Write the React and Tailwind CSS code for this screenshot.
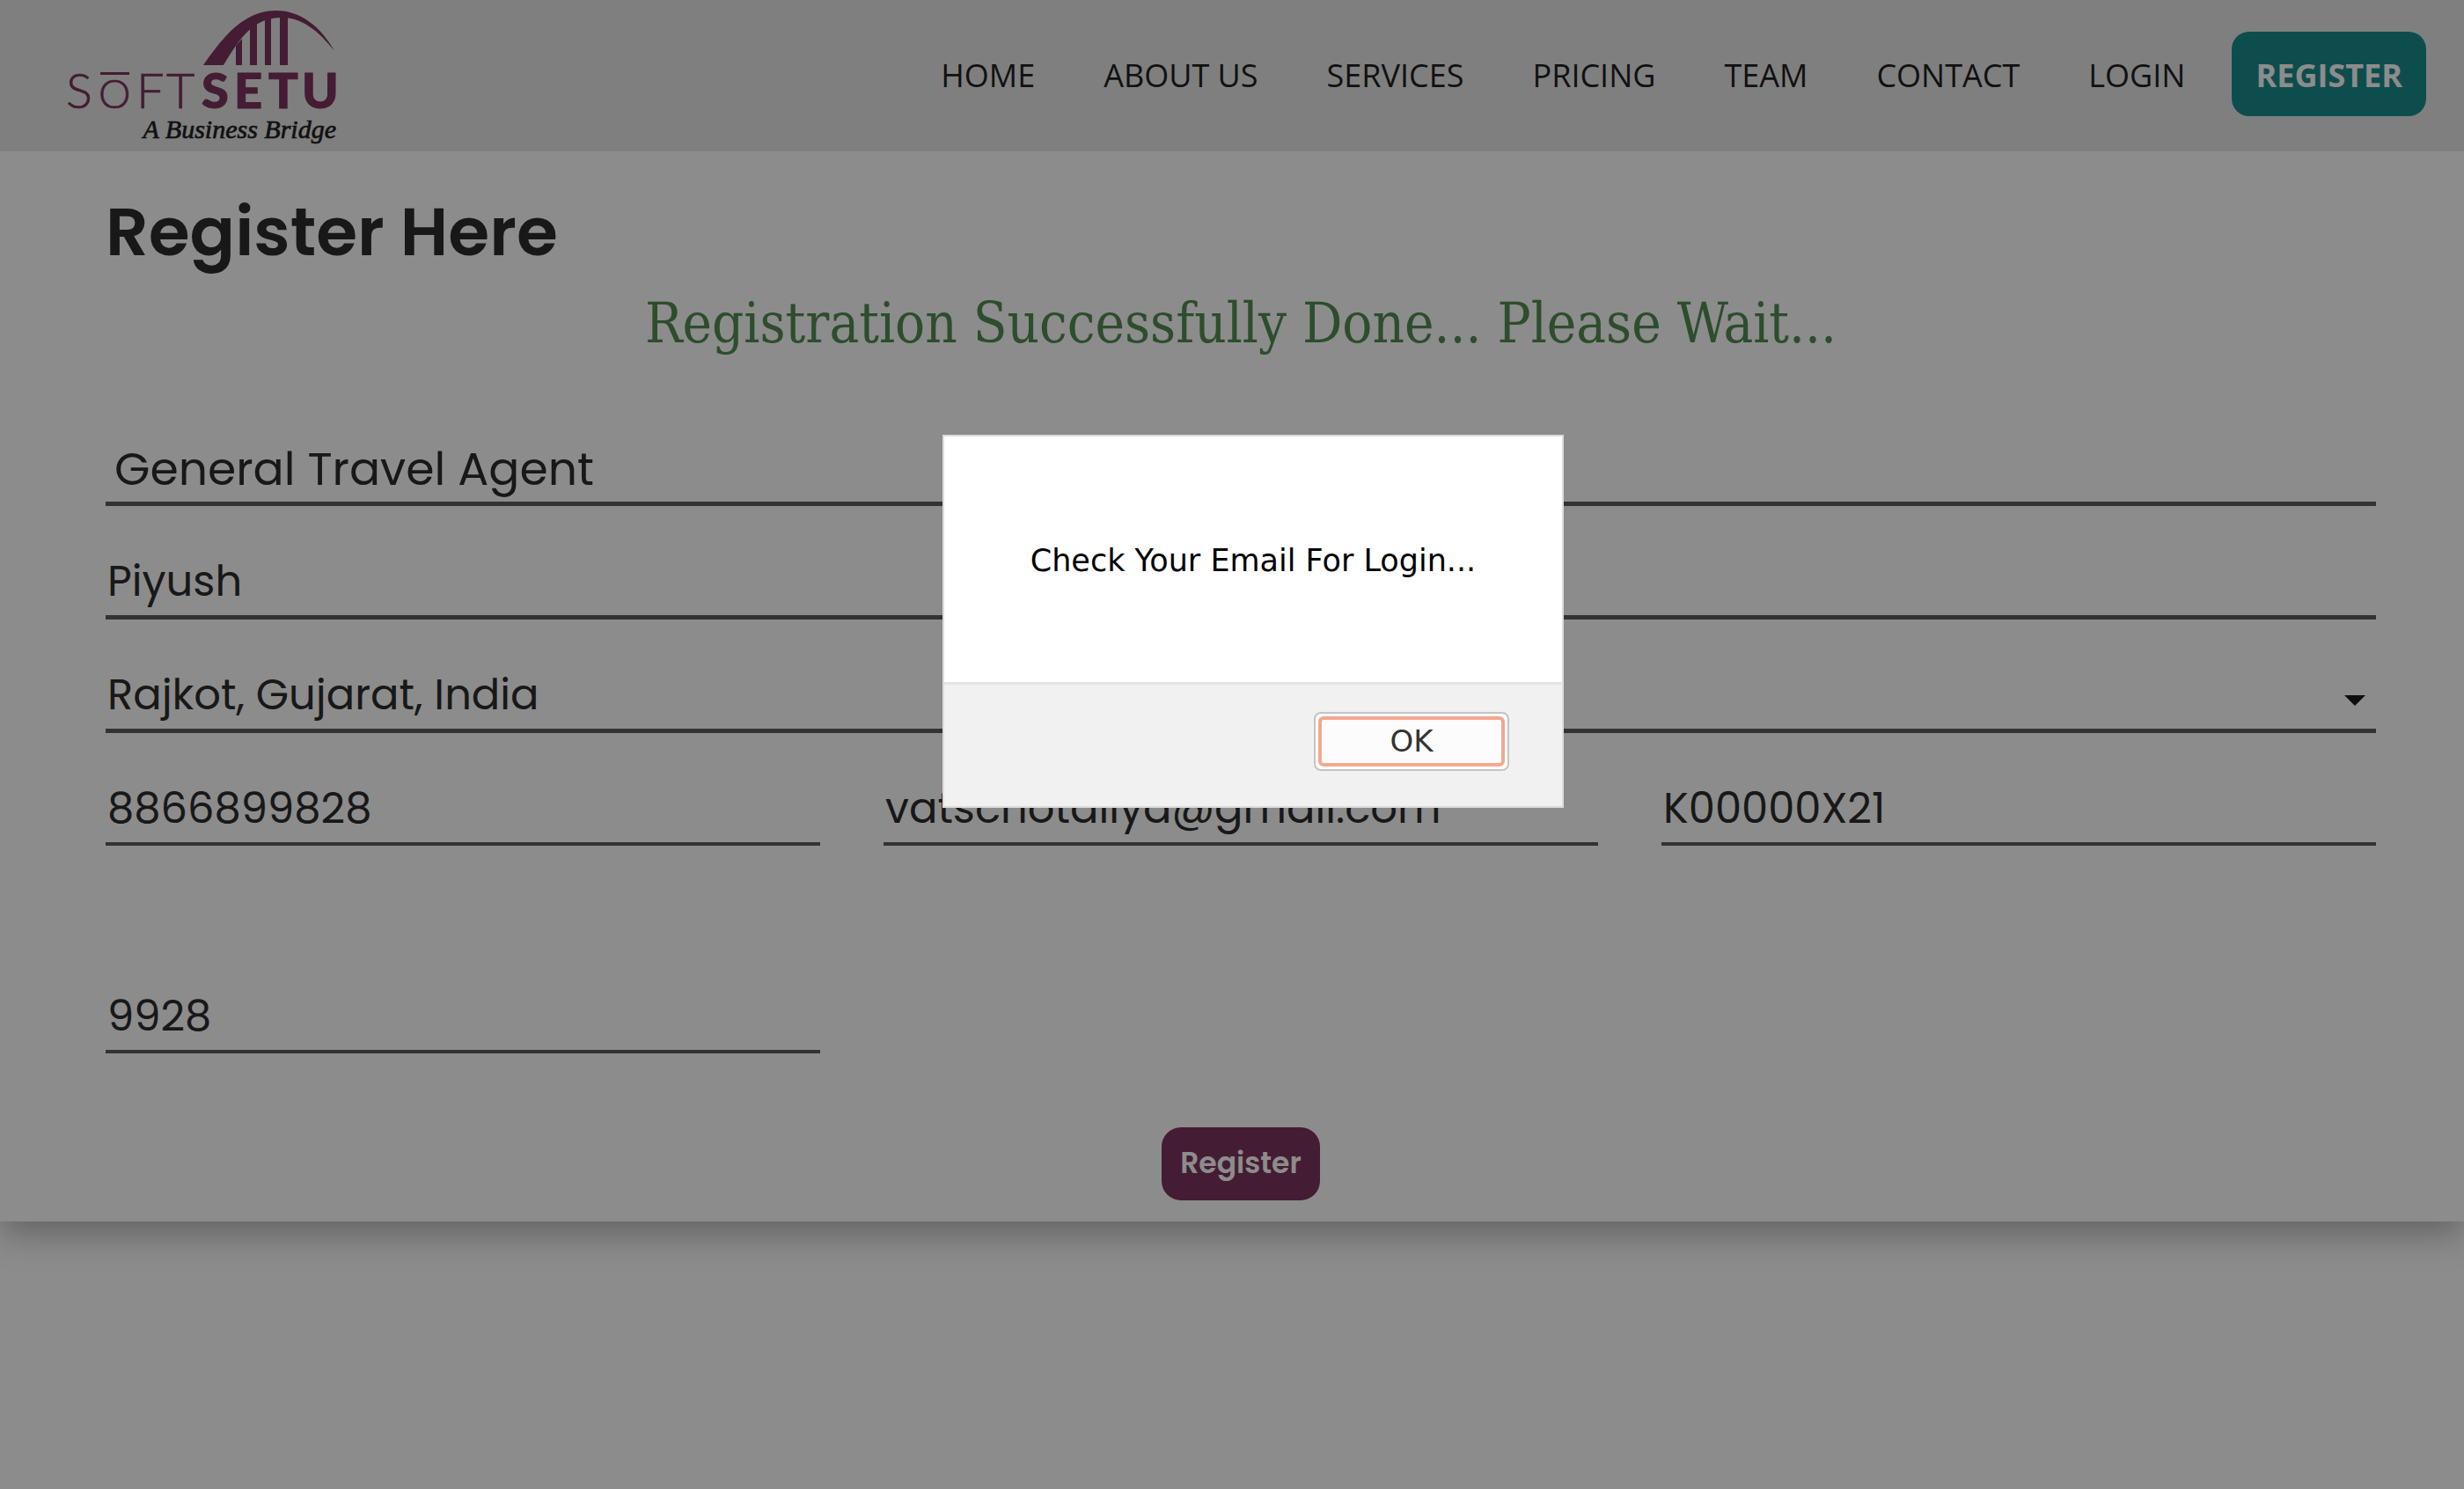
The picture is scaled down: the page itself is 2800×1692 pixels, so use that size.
import React from "react";

const LINKS = ["HOME", "ABOUT US", "SERVICES", "PRICING", "TEAM", "CONTACT", "LOGIN"];

const FIELD =
  "block w-full appearance-none rounded-none border-[#5d5d5d] bg-transparent text-[#2d2d2d] outline-none";
const WIDE = `${FIELD} h-[81px] border-b-5`;
const NARROW = `${FIELD} h-[80px] border-b-4 pl-[2px] text-[48px]`;

const DETAILS = [
  { id: "mobile", label: "Mobile number", type: "tel", value: "8866899828" },
  { id: "email", label: "Email", type: "email", value: "vatschotaliya@gmail.com" },
  { id: "reference", label: "Reference code", type: "text", value: "K00000X21" },
  { id: "otp", label: "One-time code", type: "text", value: "9928" },
];

function Logo() {
  return (
    <svg viewBox="0 0 320 172" className="h-[172px] w-[320px] shrink-0" role="img" aria-label="SoftSetu, A Business Bridge">
      <g fill="#7c335d">
        <path d="M155 74C179 39 203 12 238 12C266 12 289 31 304 58C286 35 267 20 245 20C211 20 197 43 178 74Z" />
        <path d="M192 52L199 44V74H192ZM208 32L216 26V74H208ZM225 20H232V74H225ZM242 16H251V74H242Z" />
        <rect x="38" y="82" width="33" height="3" />
      </g>
      <g fill="#7c335d" fontFamily="Lato, 'Liberation Sans', sans-serif">
        <g fontSize="56" fontWeight="300" stroke="#7c335d" strokeWidth="0.7">
          <text x="-1" y="123">S</text>
          <text x="79" y="123">F</text>
          <text x="113" y="123">T</text>
        </g>
        <text x="36" y="123" fontSize="46" fontWeight="300" stroke="#7c335d" strokeWidth="0.7">O</text>
        <g fontSize="56" fontWeight="900" stroke="#7c335d" strokeWidth="1">
          <text x="153" y="123">S</text>
          <text x="190" y="123">E</text>
          <text x="229" y="123">T</text>
          <text x="267" y="123">U</text>
        </g>
      </g>
      <text x="306" y="157" textAnchor="end" fill="#1f1f1f" stroke="#1f1f1f" strokeWidth="0.7" fontSize="30" fontStyle="italic" fontFamily="'Liberation Serif', serif">
        A Business Bridge
      </text>
    </svg>
  );
}

function Header() {
  return (
    <header className="relative z-10 flex h-[172px] items-center justify-between bg-[#e7e7e7] pr-[43px] pl-[76px]">
      <Logo />
      <nav className="mb-1 flex items-baseline gap-[53px] font-['Open_Sans',sans-serif] text-[36px] leading-[48px] text-[#1f1f1f]">
        <ul className="flex gap-[78px]">
          {LINKS.map((name) => (
            <li key={name}>
              <a href="#">{name}</a>
            </li>
          ))}
        </ul>
        <a href="#" className="rounded-[20px] bg-[#1b8c8c] px-[27px] pt-[26px] pb-[22px] font-bold text-white">
          REGISTER
        </a>
      </nav>
    </header>
  );
}

function RegisterForm() {
  return (
    <main className="bg-white pt-[46px] pr-[100px] pb-[24px] pl-[120px] shadow-[0_12px_40px_rgba(0,0,0,0.32)]">
      <h1 className="text-[76px] leading-[92px] font-semibold text-[#2d2d2d]">Register Here</h1>
      <p className="mt-[20px] text-center font-['DejaVu_Serif_Condensed','DejaVu_Serif',serif] text-[63px] leading-[76px] text-[#528c52]">
        Registration Successfully Done... Please Wait...
      </p>
      <form className="mt-[88px]" onSubmit={(e) => e.preventDefault()}>
        <div className="flex flex-col gap-[48px]">
          <select aria-label="Business type" className={`${WIDE} pl-[10px] text-[52px]`}>
            <option>General Travel Agent</option>
          </select>
          <input aria-label="Name" defaultValue="Piyush" className={`${WIDE} pl-[2px] text-[48px]`} />
          <div className="relative">
            <select aria-label="City" className={`${WIDE} pl-[2px] text-[48px]`}>
              <option>Rajkot, Gujarat, India</option>
            </select>
            <svg viewBox="0 0 24 12" className="pointer-events-none absolute right-[12px] bottom-[31px] h-[12px] w-[24px]" aria-hidden="true">
              <path d="M0 0H24L12 12Z" fill="#1a1a1a" />
            </svg>
          </div>
          <div className="grid grid-cols-3 gap-x-[72px] gap-y-[156px]">
            {DETAILS.map((f) => (
              <input key={f.id} id={f.id} aria-label={f.label} type={f.type} defaultValue={f.value} className={NARROW} />
            ))}
          </div>
        </div>
        <button type="submit" className="mx-auto mt-[84px] block rounded-[22px] bg-[#7c335d] px-[21px] pt-[15px] pb-[17px] text-[33px] leading-[51px] font-semibold text-white">
          Register
        </button>
      </form>
    </main>
  );
}

function Alert() {
  return (
    <div className="fixed inset-0 z-20 flex justify-center bg-black/45 pt-[494px]">
      <div
        role="alertdialog"
        aria-labelledby="alert-text"
        className="ml-[48px] w-[706px] self-start border-2 border-[#dcdcdc] bg-white font-['DejaVu_Sans',sans-serif] text-[35px] leading-[41px]"
      >
        <p id="alert-text" className="pt-[121px] pb-[117px] text-center text-black">
          Check Your Email For Login...
        </p>
        <div className="flex justify-end border-t-3 border-[#e4e4e4] bg-[#f1f1f1] px-[60px] pt-[31px] pb-[40px]">
          <button className="rounded-[8px] border-2 border-[#c4c4c4] bg-white p-[3px] text-[34px] text-[#333]">
            <span className="block w-[212px] rounded-[6px] border-4 border-[#f4a88f] bg-[#fcfcfc] py-[4px]">OK</span>
          </button>
        </div>
      </div>
    </div>
  );
}

export default function App() {
  return (
    <div className="min-h-screen overflow-hidden bg-white font-['Poppins','Inter',sans-serif]">
      <Header />
      <RegisterForm />
      <Alert />
    </div>
  );
}
